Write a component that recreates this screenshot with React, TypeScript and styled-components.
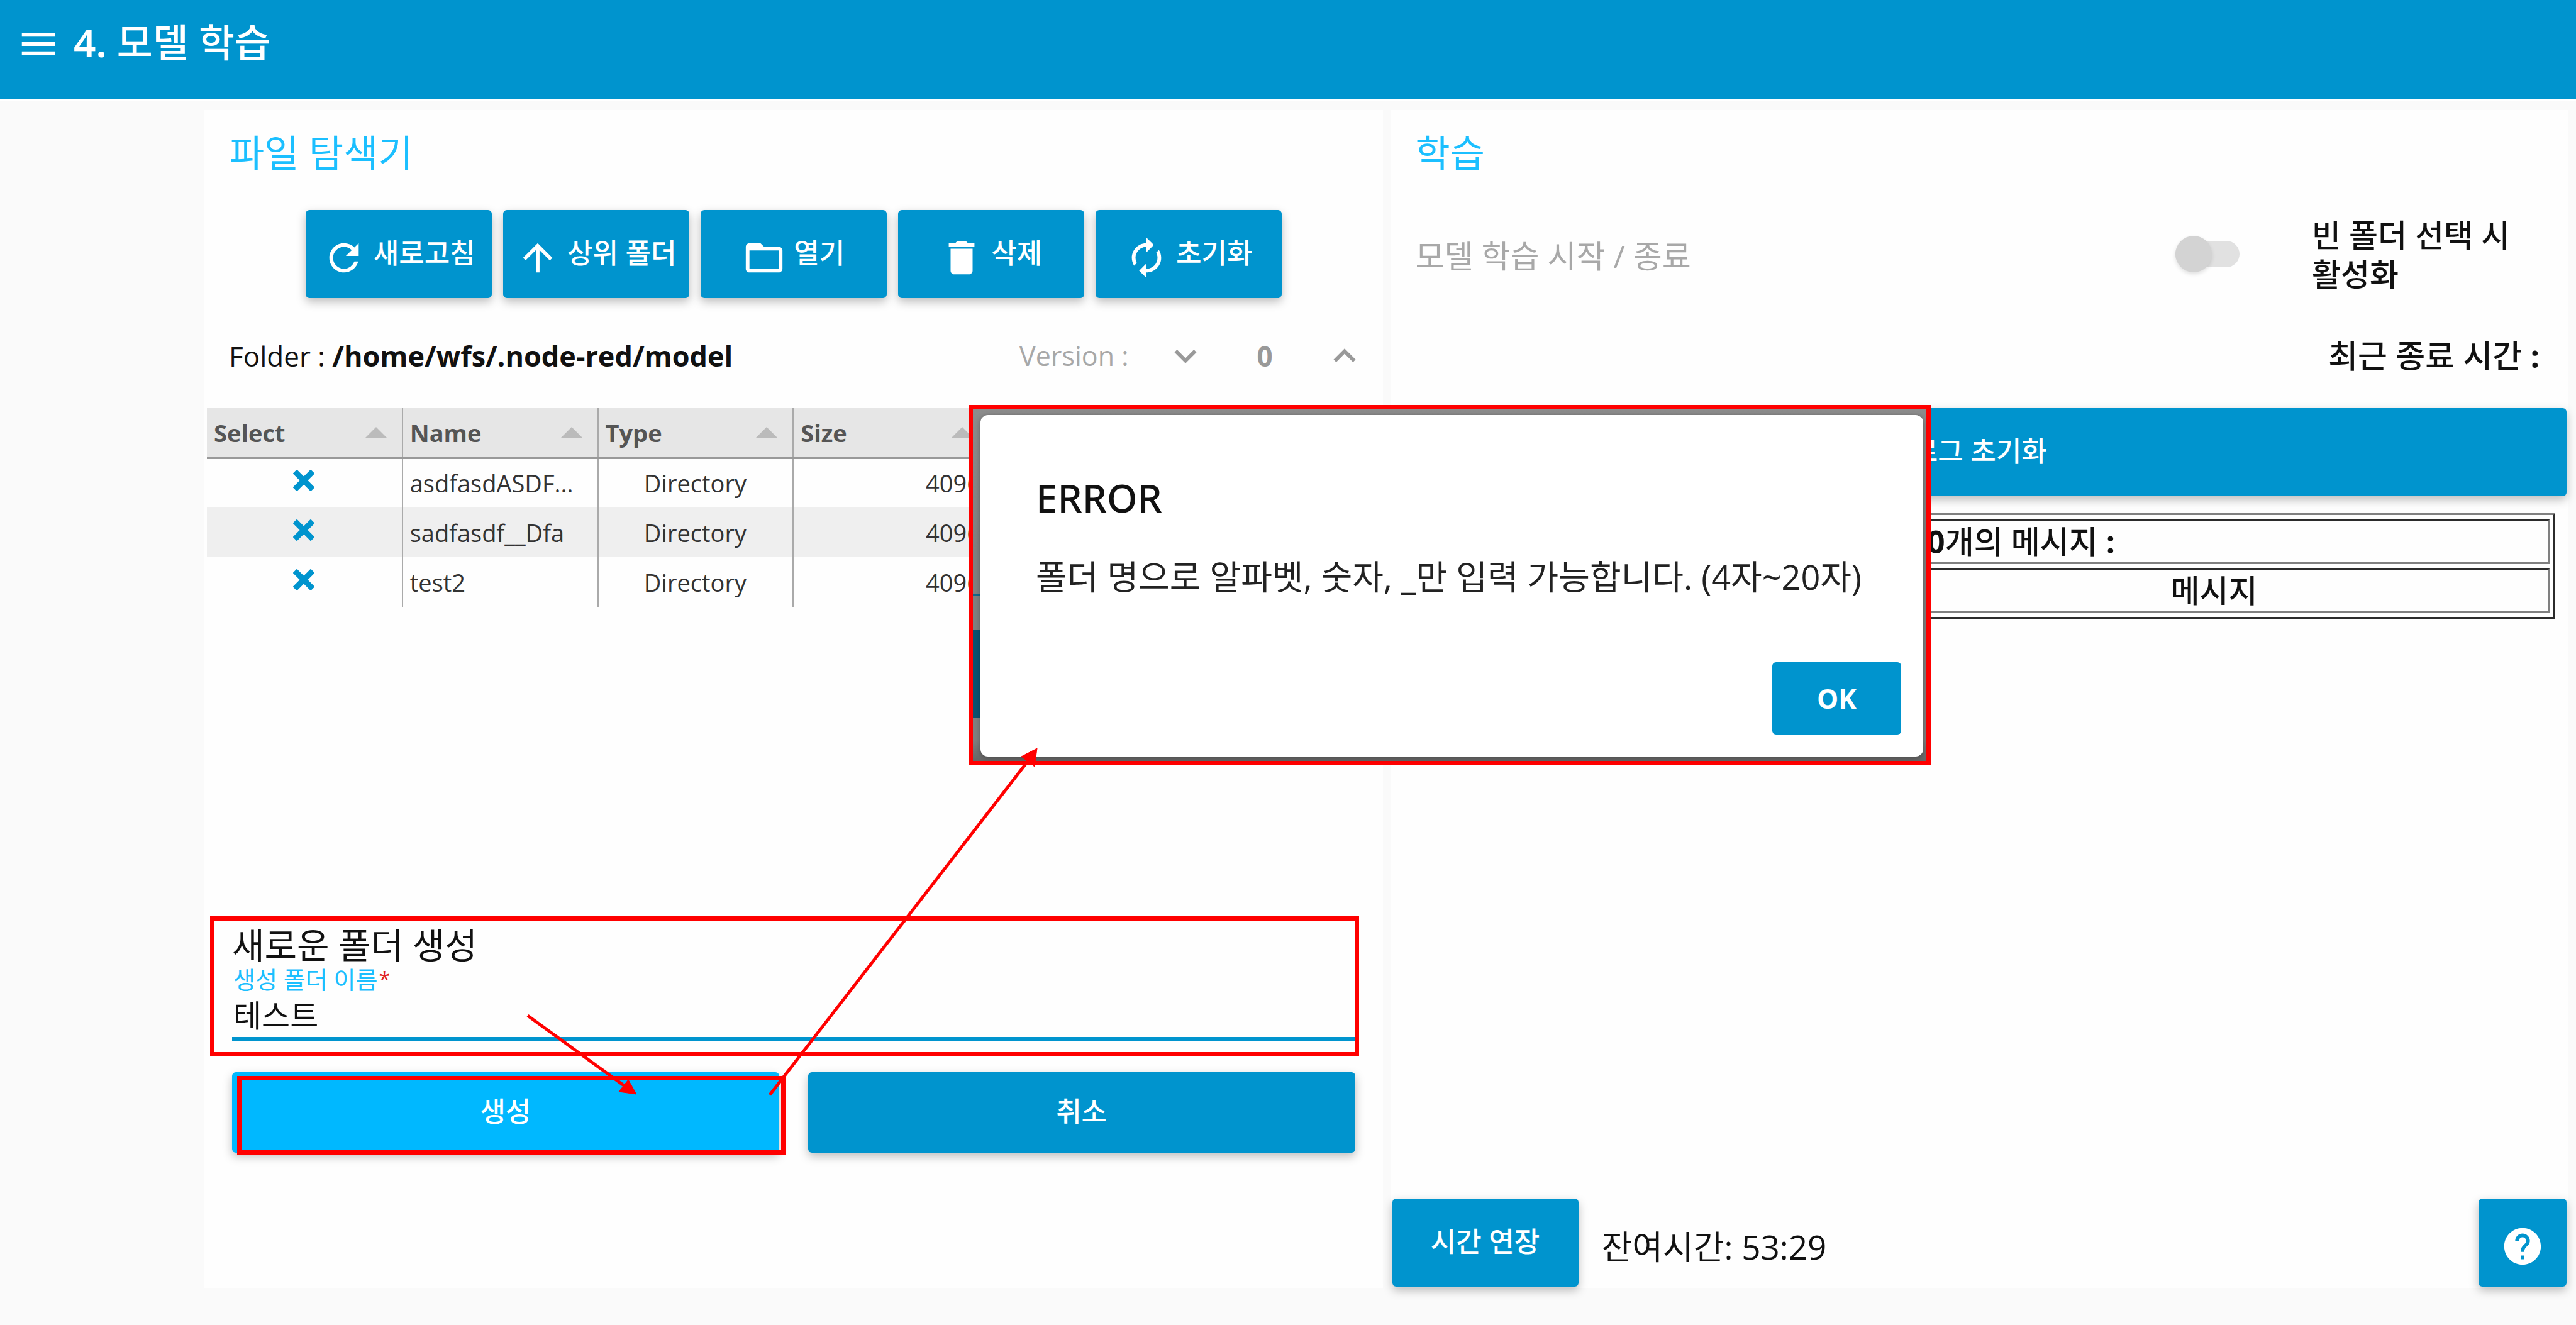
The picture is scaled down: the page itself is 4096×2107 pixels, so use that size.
import React, { useState } from "react";
import styled, { createGlobalStyle } from "styled-components";
import {
  MdMenu,
  MdRefresh,
  MdArrowUpward,
  MdFolderOpen,
  MdDelete,
  MdAutorenew,
  MdExpandMore,
  MdExpandLess,
  MdHelp,
} from "react-icons/md";

const color = {
  primary: "#0094ce",
  active: "#00b8ff",
  accent: "#1bbfff",
  page: "#fafafa",
  panel: "#fefefe",
  muted: "#a8a8a8",
  mark: "#ff0000",
};

const GlobalStyle = createGlobalStyle`
  *, *::before, *::after { box-sizing: border-box; }
  body {
    margin: 0;
    background: ${color.page};
    color: #111;
    font-family: "Open Sans", "Noto Sans", "Noto Sans CJK KR", sans-serif;
    font-size: 48px;
    word-break: keep-all;
  }
  button, input { font-family: inherit; }
  h1, h2, h3, p { margin: 0; font-weight: 400; }
`;

const Page = styled.div`
  position: relative;
  display: flex;
  flex-direction: column;
  min-height: 100vh;
  overflow: hidden;
`;

const Header = styled.header`
  display: flex;
  align-items: flex-start;
  gap: 21px;
  height: 160px;
  padding: 35px 26px 0;
  background: ${color.primary};
  border-bottom: 3px solid #fff;
  color: #fff;
`;

const MenuButton = styled.button`
  display: flex;
  padding: 0;
  border: 0;
  background: none;
  color: inherit;
  font-size: 70px;
`;

const PageTitle = styled.h1`
  font-family: "Noto Sans", "Noto Sans CJK KR", sans-serif;
  font-size: 62px;
  line-height: 64px;
  font-weight: 500;

  b { font-weight: 600; }
`;

const Main = styled.main`
  flex: 1;
  display: grid;
  grid-template-columns: 1fr 1fr;
  gap: 12px;
  padding: 15px 12px 59px 325px;
`;

const Panel = styled.section`
  display: flex;
  flex-direction: column;
  background: ${color.panel};
`;

const PanelTitle = styled.h2`
  height: 159px;
  padding: 0 40px;
  color: ${color.accent};
  font-size: 60px;
  line-height: 136px;
`;

const Button = styled.button<{ $active?: boolean; $height?: number; $width?: number }>`
  display: flex;
  align-items: center;
  justify-content: center;
  gap: 12px;
  width: ${(p) => (p.$width ? `${p.$width}px` : "auto")};
  height: ${(p) => p.$height ?? 140}px;
  padding: 0 0 8px;
  border: 0;
  border-radius: 6px;
  background: ${(p) => (p.$active ? color.active : color.primary)};
  box-shadow: 0 6px 15px rgba(0, 0, 0, 0.26);
  color: #fff;
  font-size: 44px;
  font-weight: 500;
  white-space: nowrap;

  svg {
    flex: none;
    width: 70px;
    height: 70px;
    margin-top: 20px;
  }
`;

const Toolbar = styled.div`
  display: flex;
  justify-content: center;
  gap: 18px;
`;

const InfoRow = styled.div<{ $end?: boolean }>`
  display: flex;
  align-items: center;
  justify-content: ${(p) => (p.$end ? "flex-end" : "space-between")};
  height: 175px;
  padding: ${(p) => (p.$end ? "2px 46px 0 41px" : "8px 26px 0 39px")};
  font-size: ${(p) => (p.$end ? 51 : 44)}px;
  font-weight: ${(p) => (p.$end ? 500 : 400)};
  white-space: pre;

  b { font-size: ${(p) => (p.$end ? 51 : 45)}px; }
`;

const Version = styled.div`
  display: flex;
  align-items: center;
  color: ${color.muted};
`;

const VersionLabel = styled.span`
  margin-right: 55px;
  font-size: 43px;
`;

const VersionValue = styled.output`
  width: 183px;
  text-align: center;
  font-weight: 700;
  color: #999;
`;

const StepButton = styled.button`
  display: flex;
  padding: 0;
  border: 0;
  background: none;
  color: #999;
  font-size: 70px;
`;

const TableArea = styled.div`
  flex: 1;
  padding: 0 4px;
`;

const FileTable = styled.table`
  width: 100%;
  table-layout: fixed;
  border-collapse: collapse;
  font-size: 38px;
  color: #333;

  th, td {
    height: 79px;
    padding: 0 12px 0 11px;
    border-right: 2px solid #aaa;
    line-height: 52px;
    white-space: nowrap;
  }
  th {
    border-bottom: 3px solid #999;
    background: #e6e6e6;
    color: #555;
    font-weight: 700;
    text-align: left;
  }
  tbody tr:nth-child(even) { background: #efefef; }
`;

const HeadCell = styled.div`
  display: flex;
  justify-content: space-between;
  align-items: center;
  padding-right: 12px;

  &::after {
    content: "";
    border: 17px solid transparent;
    border-top: 0;
    border-bottom-color: #bbb;
  }
`;

const Cell = styled.td<{ $align?: "left" | "center" | "right" }>`
  text-align: ${(p) => p.$align ?? "left"};
`;

const PickButton = styled.button`
  display: block;
  margin: 0 auto 8px;
  padding: 0;
  border: 0;
  background: none;
  line-height: 0;
`;

const Form = styled.form`
  padding: 0 44px 215px;
`;

const Fields = styled.div`
  position: relative;
`;

const Frame = styled.div<{ $inset: string }>`
  position: absolute;
  inset: ${(p) => p.$inset};
  border: 7px solid ${color.mark};
  pointer-events: none;
`;

const FormTitle = styled.h3`
  font-size: 56px;
  line-height: 56px;
`;

const FieldLabel = styled.label`
  display: flex;
  gap: 2px;
  padding-left: 2px;
  color: ${color.accent};
  font-size: 38px;
  line-height: 54px;

  span { color: #e02020; font-size: 32px; }
`;

const TextInput = styled.input`
  display: block;
  width: 100%;
  height: 71px;
  padding: 0 2px 10px;
  border: 0;
  border-bottom: 6px solid ${color.primary};
  outline: none;
  background: transparent;
  color: #111;
  font-size: 49px;
`;

const FormActions = styled.div`
  display: grid;
  grid-template-columns: 1fr 1fr;
  gap: 46px;
  margin-top: 50px;
`;

const ActionSlot = styled.div`
  position: relative;
  display: grid;
`;

const SwitchRow = styled.div`
  display: flex;
  align-items: center;
  height: 140px;
  padding: 0 34px 0 40px;
`;

const SwitchLabel = styled.label`
  flex: 1;
  color: ${color.muted};
  font-size: 50px;
`;

const Switch = styled.input`
  appearance: none;
  position: relative;
  width: 102px;
  height: 42px;
  margin: 0 115px 0 0;
  border-radius: 21px;
  background: #e1e1e1;

  &::before {
    content: "";
    position: absolute;
    left: 0;
    top: -8px;
    width: 58px;
    height: 58px;
    border-radius: 50%;
    background: #d3d3d3;
    box-shadow: 0 3px 6px rgba(0, 0, 0, 0.12);
  }
`;

const SwitchHint = styled.p`
  width: 374px;
  padding-top: 2px;
  font-size: 50px;
  line-height: 62px;
  font-weight: 500;
`;

const LogButtonRow = styled.div`
  display: grid;
  padding: 0 3px 0 4px;
`;

const LogTable = styled.table`
  margin: 27px 21px 0 20px;
  border: 3px solid;
  border-color: #808080 #2b2b2b #2b2b2b #808080;
  border-spacing: 5px 6px;
  font-size: 50px;

  th {
    height: 72px;
    padding: 0;
    border: 3px solid;
    border-color: #2b2b2b #808080 #808080 #2b2b2b;
    line-height: 60px;
    font-weight: 500;
  }
`;

const TimeColumn = styled.col`
  width: 41%;
`;

const PanelFooter = styled.footer`
  display: flex;
  align-items: center;
  margin-top: auto;
  padding: 0 3px 2px;
`;

const Remaining = styled.p`
  flex: 1;
  padding: 8px 0 0 37px;
  font-size: 53px;
`;

const Dialog = styled.div`
  position: absolute;
  left: 1540px;
  top: 644px;
  width: 1530px;
  height: 573px;
  padding: 9px 5px 7px 12px;
  border: 7px solid ${color.mark};
  background:
    linear-gradient(#0a5270, #0a5270) 0 351px / 12px 140px no-repeat,
    linear-gradient(#12688c, #12688c) 0 293px / 12px 4px no-repeat,
    linear-gradient(#8c8c8c, #808080 40%, #808080 94%, #666);
`;

const DialogBody = styled.div`
  display: flex;
  flex-direction: column;
  height: 100%;
  padding: 85px 35px 35px 88px;
  border-radius: 12px;
  background: #fff;
  box-shadow: 0 2px 8px rgba(0, 0, 0, 0.35);
`;

const DialogTitle = styled.h2`
  font-family: "Noto Sans", "Open Sans", sans-serif;
  font-size: 62px;
  line-height: 92px;
  font-weight: 500;
`;

const DialogText = styled.p`
  margin-top: 44px;
  font-size: 54px;
  line-height: 72px;
  color: #222;
`;

const DialogButton = styled.button`
  align-self: flex-end;
  width: 205px;
  height: 115px;
  margin-top: auto;
  border: 0;
  border-radius: 6px;
  background: ${color.primary};
  color: #fff;
  font-size: 43px;
  font-weight: 700;
`;

const Arrows = styled.svg`
  position: absolute;
  left: 0;
  top: 0;
  width: 100%;
  height: 100%;
  pointer-events: none;
`;

const tools = [
  { icon: MdRefresh, label: "새로고침" },
  { icon: MdArrowUpward, label: "상위 폴더" },
  { icon: MdFolderOpen, label: "열기" },
  { icon: MdDelete, label: "삭제" },
  { icon: MdAutorenew, label: "초기화" },
];

const columns = ["Select", "Name", "Type", "Size", "", ""];

const files = [
  { name: "asdfasdASDF...", type: "Directory", size: 4096 },
  { name: "sadfasdf__Dfa", type: "Directory", size: 4096 },
  { name: "test2", type: "Directory", size: 4096 },
];

const CrossIcon = () => (
  <svg width="38" height="38" viewBox="0 0 38 38" aria-hidden="true">
    <path
      d="M3 8 L8 3 L19 14 L30 3 L35 8 L24 19 L35 30 L30 35 L19 24 L8 35 L3 30 L14 19 Z"
      fill={color.primary}
      stroke={color.primary}
      strokeWidth="2"
      strokeLinejoin="round"
    />
  </svg>
);

export default function App() {
  const [folderName, setFolderName] = useState("테스트");

  return (
    <>
      <GlobalStyle />
      <Page>
        <Header>
          <MenuButton aria-label="menu">
            <MdMenu />
          </MenuButton>
          <PageTitle>
            <b>4.</b> 모델 학습
          </PageTitle>
        </Header>

        <Main>
          <Panel>
            <PanelTitle>파일 탐색기</PanelTitle>
            <Toolbar>
              {tools.map(({ icon: Icon, label }) => (
                <Button key={label} $width={296}>
                  <Icon />
                  {label}
                </Button>
              ))}
            </Toolbar>
            <InfoRow>
              <span>
                Folder : <b>/home/wfs/.node-red/model</b>
              </span>
              <Version>
                <VersionLabel>Version :</VersionLabel>
                <StepButton aria-label="previous version">
                  <MdExpandMore />
                </StepButton>
                <VersionValue>0</VersionValue>
                <StepButton aria-label="next version">
                  <MdExpandLess />
                </StepButton>
              </Version>
            </InfoRow>
            <TableArea>
              <FileTable>
                <thead>
                  <tr>
                    {columns.map((name, i) => (
                      <th key={i}>
                        <HeadCell>{name}</HeadCell>
                      </th>
                    ))}
                  </tr>
                </thead>
                <tbody>
                  {files.map((file) => (
                    <tr key={file.name}>
                      <Cell $align="center">
                        <PickButton aria-label={file.name}>
                          <CrossIcon />
                        </PickButton>
                      </Cell>
                      <Cell>{file.name}</Cell>
                      <Cell $align="center">{file.type}</Cell>
                      <Cell $align="right">{file.size}</Cell>
                      <Cell />
                      <Cell />
                    </tr>
                  ))}
                </tbody>
              </FileTable>
            </TableArea>
            <Form onSubmit={(e) => e.preventDefault()}>
              <Fields>
                <FormTitle>새로운 폴더 생성</FormTitle>
                <FieldLabel htmlFor="folder-name">
                  생성 폴더 이름<span>*</span>
                </FieldLabel>
                <TextInput
                  id="folder-name"
                  value={folderName}
                  onChange={(e) => setFolderName(e.target.value)}
                />
                <Frame $inset="-17px -6px -25px -35px" />
              </Fields>
              <FormActions>
                <ActionSlot>
                  <Button type="submit" $active $height={128}>
                    생성
                  </Button>
                  <Frame $inset="6px -10px -3px 8px" />
                </ActionSlot>
                <ActionSlot>
                  <Button type="button" $height={128}>
                    취소
                  </Button>
                </ActionSlot>
              </FormActions>
            </Form>
          </Panel>

          <Panel>
            <PanelTitle>학습</PanelTitle>
            <SwitchRow>
              <SwitchLabel htmlFor="train">모델 학습 시작 / 종료</SwitchLabel>
              <Switch id="train" type="checkbox" disabled />
              <SwitchHint>빈 폴더 선택 시 활성화</SwitchHint>
            </SwitchRow>
            <InfoRow $end>
              <span>
                최근 종료 시간 <b>:</b>
              </span>
            </InfoRow>
            <LogButtonRow>
              <Button>로그 초기화</Button>
            </LogButtonRow>
            <LogTable>
              <colgroup>
                <TimeColumn />
                <col />
              </colgroup>
              <thead>
                <tr>
                  <th colSpan={2}>
                    최근 1<b>0</b>개의 메시지 <b>:</b>
                  </th>
                </tr>
                <tr>
                  <th />
                  <th>메시지</th>
                </tr>
              </thead>
            </LogTable>
            <PanelFooter>
              <Button $width={296}>시간 연장</Button>
              <Remaining>잔여시간: 53:29</Remaining>
              <Button $width={140} aria-label="help">
                <MdHelp />
              </Button>
            </PanelFooter>
          </Panel>
        </Main>

        <Dialog role="alertdialog" aria-labelledby="dialog-title">
          <DialogBody>
            <DialogTitle id="dialog-title">ERROR</DialogTitle>
            <DialogText>폴더 명으로 알파벳, 숫자, _만 입력 가능합니다. (4자~20자)</DialogText>
            <DialogButton>OK</DialogButton>
          </DialogBody>
        </Dialog>

        <Arrows aria-hidden="true">
          <g stroke={color.mark} strokeWidth="5" fill={color.mark}>
            <line x1="839" y1="1615" x2="996" y2="1729" />
            <line x1="1224" y1="1741" x2="1637" y2="1207" />
            <path d="M1012 1740 L999 1717 L984 1736 Z" strokeWidth="1" />
            <path d="M1649 1190 L1624 1203 L1645 1219 Z" strokeWidth="1" />
          </g>
        </Arrows>
      </Page>
    </>
  );
}
